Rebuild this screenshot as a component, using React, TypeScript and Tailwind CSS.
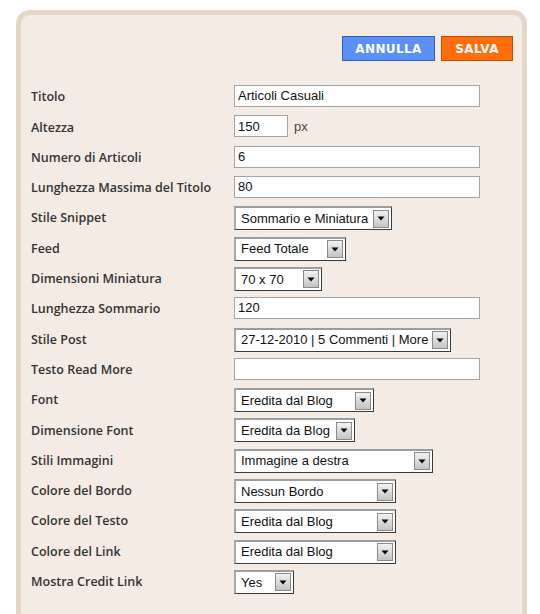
import React from "react";

type Row =
  | { label: string; kind: "text"; value: string }
  | { label: string; kind: "small"; value: string }
  | { label: string; kind: "select"; value: string; w: number };

const rows: Row[] = [
  { label: "Titolo", kind: "text", value: "Articoli Casuali" },
  { label: "Altezza", kind: "small", value: "150" },
  { label: "Numero di Articoli", kind: "text", value: "6" },
  { label: "Lunghezza Massima del Titolo", kind: "text", value: "80" },
  { label: "Stile Snippet", kind: "select", value: "Sommario e Miniatura", w: 158 },
  { label: "Feed", kind: "select", value: "Feed Totale", w: 112 },
  { label: "Dimensioni Miniatura", kind: "select", value: "70 x 70", w: 88 },
  { label: "Lunghezza Sommario", kind: "text", value: "120" },
  { label: "Stile Post", kind: "select", value: "27-12-2010 | 5 Commenti | More", w: 217 },
  { label: "Testo Read More", kind: "text", value: "" },
  { label: "Font", kind: "select", value: "Eredita dal Blog", w: 140 },
  { label: "Dimensione Font", kind: "select", value: "Eredita da Blog", w: 121 },
  { label: "Stili Immagini", kind: "select", value: "Immagine a destra", w: 199 },
  { label: "Colore del Bordo", kind: "select", value: "Nessun Bordo", w: 162 },
  { label: "Colore del Testo", kind: "select", value: "Eredita dal Blog", w: 162 },
  { label: "Colore del Link", kind: "select", value: "Eredita dal Blog", w: 162 },
  { label: "Mostra Credit Link", kind: "select", value: "Yes", w: 60 },
];

const ctl = { fontFamily: '"Liberation Sans", Arial, sans-serif' };

function Arrow() {
  return (
    <div className="ml-auto mr-[2px] flex h-[18px] w-[16px] items-center justify-center border border-[#8a8a8a] bg-gradient-to-b from-[#f2f2f2] to-[#c4c4c4]">
      <svg width="8" height="5" viewBox="0 0 8 5">
        <path d="M0.5 0.5 L7.5 0.5 L4 4.5 Z" fill="#000" />
      </svg>
    </div>
  );
}

function Control({ row }: { row: Row }) {
  if (row.kind === "text") {
    return (
      <div
        className="flex h-[22px] w-[246px] items-center border border-[#a5a5a5] bg-white pl-[3px] text-[13px] text-[#111]"
        style={ctl}
      >
        {row.value}
      </div>
    );
  }
  if (row.kind === "small") {
    return (
      <div className="flex items-center">
        <div
          className="flex h-[22px] w-[54px] items-center border border-[#a5a5a5] bg-white pl-[3px] text-[13px] text-[#111]"
          style={ctl}
        >
          {row.value}
        </div>
        <span className="ml-[6px] text-[13px] text-[#444]" style={ctl}>
          px
        </span>
      </div>
    );
  }
  return (
    <div
      className="mt-[2px] flex h-[24px] items-center border border-t-2 border-l-2 border-t-[#9c9c9c] border-l-[#a8a8a8] border-r-[#3a3a3a] border-b-[#3a3a3a] bg-white pl-[5px] text-[13px] text-[#111]"
      style={{ ...ctl, width: row.w }}
    >
      <span className="whitespace-nowrap">{row.value}</span>
      <Arrow />
    </div>
  );
}

export default function App() {
  return (
    <div className="min-h-[614px] bg-white pl-[16px] pt-[10px]">
      <div className="h-[620px] w-[511px] rounded-t-[14px] border-[5px] border-b-0 border-[#e4d7c8] bg-[#f4ece4] pl-[10px] pr-[9px] pt-[21px]">
        <div className="flex justify-end gap-[6px]">
          <button
            className="flex h-[25px] w-[93px] items-center justify-center border border-[#2e5fb5] bg-[#5a90f8] text-[12px] font-bold tracking-[0.4px] text-white"
            style={{ fontFamily: '"DejaVu Sans", Verdana, sans-serif' }}
          >
            ANNULLA
          </button>
          <button
            className="flex h-[25px] w-[72px] items-center justify-center border border-[#b9500a] bg-[#ff6d0c] text-[12px] font-bold tracking-[0.4px] text-white"
            style={{ fontFamily: '"DejaVu Sans", Verdana, sans-serif' }}
          >
            SALVA
          </button>
        </div>
        <div className="mt-[20px]">
          {rows.map((r) => (
            <div key={r.label} className="flex h-[30.3px] items-center">
              <div
                className="w-[203px] pt-[3px] text-[12.5px] font-semibold text-[#333]"
                style={{ fontFamily: '"Open Sans", "DejaVu Sans", sans-serif' }}
              >
                {r.label}
              </div>
              <Control row={r} />
            </div>
          ))}
        </div>
      </div>
    </div>
  );
}
